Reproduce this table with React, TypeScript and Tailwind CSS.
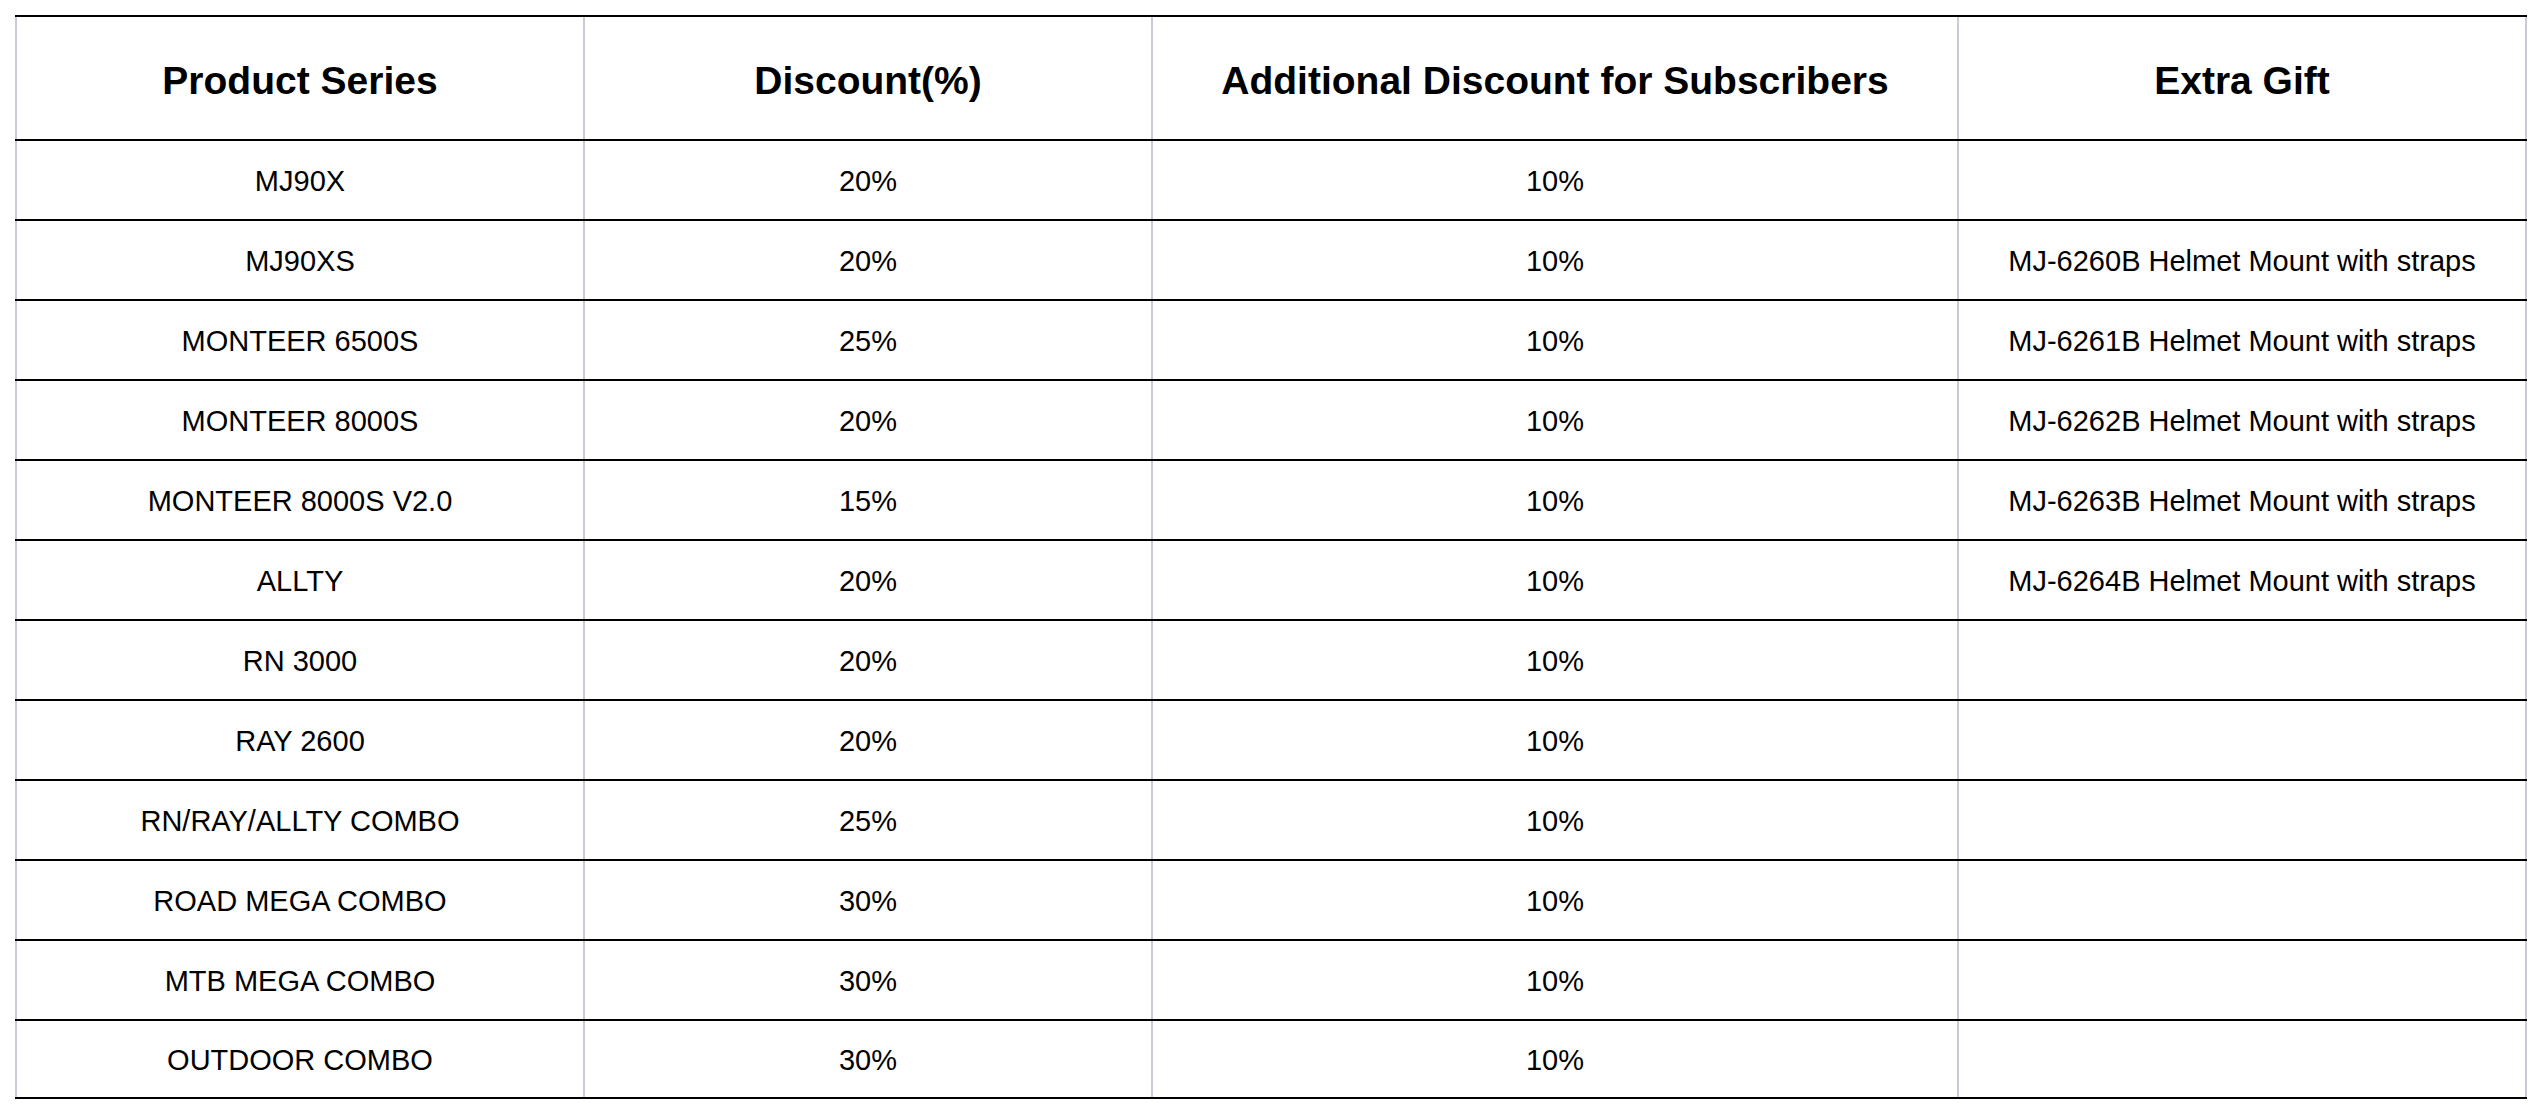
import React from "react";

const headers = ["Product Series", "Discount(%)", "Additional Discount for Subscribers", "Extra Gift"];

const rows: [string, string, string, string][] = [
  ["MJ90X", "20%", "10%", ""],
  ["MJ90XS", "20%", "10%", "MJ-6260B Helmet Mount with straps"],
  ["MONTEER 6500S", "25%", "10%", "MJ-6261B Helmet Mount with straps"],
  ["MONTEER 8000S", "20%", "10%", "MJ-6262B Helmet Mount with straps"],
  ["MONTEER 8000S V2.0", "15%", "10%", "MJ-6263B Helmet Mount with straps"],
  ["ALLTY", "20%", "10%", "MJ-6264B Helmet Mount with straps"],
  ["RN 3000", "20%", "10%", ""],
  ["RAY 2600", "20%", "10%", ""],
  ["RN/RAY/ALLTY COMBO", "25%", "10%", ""],
  ["ROAD MEGA COMBO", "30%", "10%", ""],
  ["MTB MEGA COMBO", "30%", "10%", ""],
  ["OUTDOOR COMBO", "30%", "10%", ""],
];

function Row({ cells, header, last }: { cells: string[]; header?: boolean; last?: boolean }) {
  const pad = header ? "pt-[5px]" : "pt-[2px]";
  return (
    <div
      className={
        "flex border-t-2 border-black " +
        (last ? "border-b-2 " : "") +
        (header ? "h-[124px]" : "h-[80px]")
      }
    >
      <div className={"w-[568px] shrink-0 border-l-2 border-[#c8ccd5] flex items-center justify-center " + pad}>
        {cells[0]}
      </div>
      <div className={"w-[568px] shrink-0 border-l-2 border-[#c8ccd5] flex items-center justify-center " + pad}>
        {cells[1]}
      </div>
      <div className={"w-[806px] shrink-0 border-l-2 border-[#c8ccd5] flex items-center justify-center " + pad}>
        {cells[2]}
      </div>
      <div className={"w-[570px] shrink-0 border-l-2 border-r-2 border-[#c8ccd5] flex items-center justify-center " + pad}>
        {cells[3]}
      </div>
    </div>
  );
}

export default function App() {
  return (
    <div className="w-[2542px] h-[1116px] bg-white pt-[15px] pl-[15px] text-black font-['Liberation_Sans',Arial,sans-serif]">
      <div className="w-[2512px]">
        <div className="text-[39px] font-bold leading-none">
          <Row cells={headers} header />
        </div>
        <div className="text-[29px] leading-none">
          {rows.map((r, i) => (
            <Row key={i} cells={r} last={i === rows.length - 1} />
          ))}
        </div>
      </div>
    </div>
  );
}
